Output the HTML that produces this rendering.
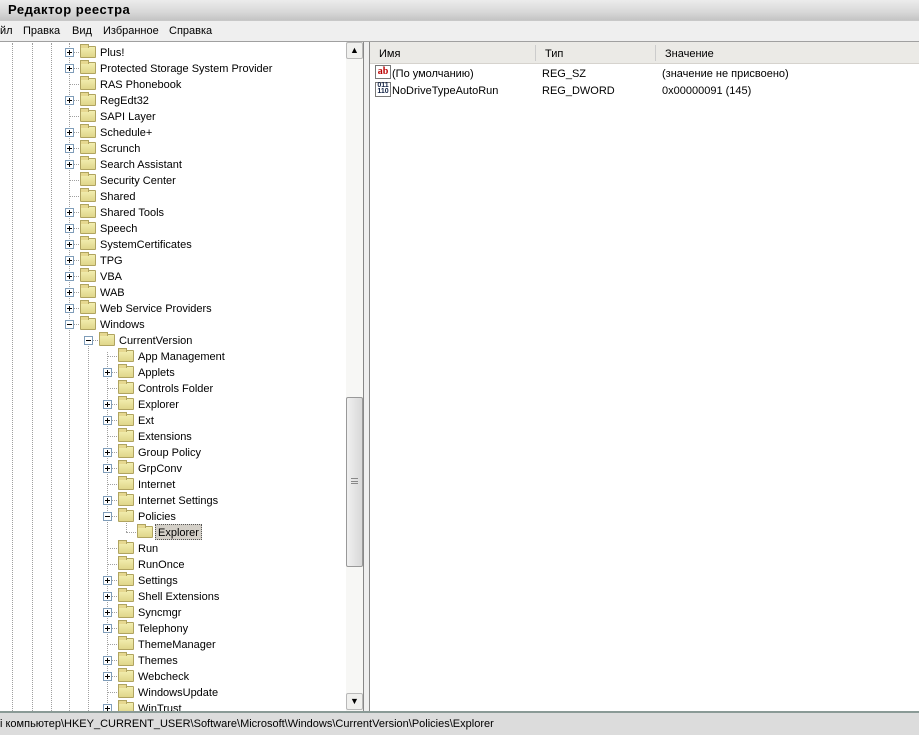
<!DOCTYPE html>
<html><head><meta charset="utf-8"><style>
*{margin:0;padding:0;box-sizing:border-box}
body{width:919px;height:735px;overflow:hidden;background:#fff;font-family:"Liberation Sans",sans-serif;font-size:11px;color:#000;position:relative}
.abs{position:absolute}
#title{left:0;top:0;width:919px;height:20px;background:linear-gradient(#ececec,#d8d8d8 60%,#c4c4c4);font-weight:bold;font-size:13px;padding:2px 0 0 8px;letter-spacing:0.5px}
#menu{left:0;top:20px;width:919px;height:22px;border-top:1px solid #c8c8c8;border-bottom:1px solid #a0a0a0;background:#efefef}
#menu span{position:absolute;top:4px}
.vl{position:absolute;width:1px;border-left:1px dotted #a0a0a0}
.hl{position:absolute;height:1px;border-top:1px dotted #a0a0a0}
.row{position:absolute;height:16px;line-height:18px;white-space:nowrap}
.pb{position:absolute;width:9px;height:9px;border:1px solid #7f9db9;background:#fff}
.pb:before{content:"";position:absolute;left:1px;top:3px;width:5px;height:1px;background:#000}
.pb.p:after{content:"";position:absolute;left:3px;top:1px;width:1px;height:5px;background:#000}
.fd{position:absolute;width:16px;height:12px;background:linear-gradient(#f2eeb0,#e0d68a);border:1px solid #b0a460;border-radius:1px}
.fd:before{content:"";position:absolute;left:-1px;top:-3px;width:7px;height:3px;background:#e6d890;border:1px solid #b0a460;border-bottom:none}
#sb{left:346px;top:42px;width:17px;height:670px;background:#f7f7f5}
#split{left:363px;top:42px;width:7px;height:670px;background:#efefef;border-left:1px solid #888;border-right:1px solid #888}
#hdr{left:370px;top:42px;width:549px;height:22px;background:#ebeae6;border-bottom:1px solid #d6d3ce}
#status{left:0;top:711px;width:919px;height:24px;background:#dcdcdc;border-top:2px solid #8a9a96}
</style></head><body>
<div id="title" class="abs">Редактор реестра</div>
<div id="menu" class="abs"><span style="left:0">йл</span><span style="left:23px">Правка</span><span style="left:72px">Вид</span><span style="left:103px">Избранное</span><span style="left:169px">Справка</span></div>

<div class="vl" style="left:12px;top:43px;height:668px"></div>
<div class="vl" style="left:32px;top:43px;height:668px"></div>
<div class="vl" style="left:51px;top:43px;height:668px"></div>
<div class="vl" style="left:69px;top:43px;height:668px"></div>
<div class="vl" style="left:88px;top:344px;height:367px"></div>
<div class="vl" style="left:107px;top:352px;height:359px"></div>
<div class="vl" style="left:126px;top:520px;height:12px"></div>

<div id="tree">
<div class="hl" style="left:69px;top:52px;width:10px"></div><div class="pb p" style="left:65px;top:48px"></div><div class="fd" style="left:80px;top:46px"></div><div class="row" style="left:100px;top:44px">Plus!</div>
<div class="hl" style="left:69px;top:68px;width:10px"></div><div class="pb p" style="left:65px;top:64px"></div><div class="fd" style="left:80px;top:62px"></div><div class="row" style="left:100px;top:60px">Protected Storage System Provider</div>
<div class="hl" style="left:69px;top:84px;width:10px"></div><div class="fd" style="left:80px;top:78px"></div><div class="row" style="left:100px;top:76px">RAS Phonebook</div>
<div class="hl" style="left:69px;top:100px;width:10px"></div><div class="pb p" style="left:65px;top:96px"></div><div class="fd" style="left:80px;top:94px"></div><div class="row" style="left:100px;top:92px">RegEdt32</div>
<div class="hl" style="left:69px;top:116px;width:10px"></div><div class="fd" style="left:80px;top:110px"></div><div class="row" style="left:100px;top:108px">SAPI Layer</div>
<div class="hl" style="left:69px;top:132px;width:10px"></div><div class="pb p" style="left:65px;top:128px"></div><div class="fd" style="left:80px;top:126px"></div><div class="row" style="left:100px;top:124px">Schedule+</div>
<div class="hl" style="left:69px;top:148px;width:10px"></div><div class="pb p" style="left:65px;top:144px"></div><div class="fd" style="left:80px;top:142px"></div><div class="row" style="left:100px;top:140px">Scrunch</div>
<div class="hl" style="left:69px;top:164px;width:10px"></div><div class="pb p" style="left:65px;top:160px"></div><div class="fd" style="left:80px;top:158px"></div><div class="row" style="left:100px;top:156px">Search Assistant</div>
<div class="hl" style="left:69px;top:180px;width:10px"></div><div class="fd" style="left:80px;top:174px"></div><div class="row" style="left:100px;top:172px">Security Center</div>
<div class="hl" style="left:69px;top:196px;width:10px"></div><div class="fd" style="left:80px;top:190px"></div><div class="row" style="left:100px;top:188px">Shared</div>
<div class="hl" style="left:69px;top:212px;width:10px"></div><div class="pb p" style="left:65px;top:208px"></div><div class="fd" style="left:80px;top:206px"></div><div class="row" style="left:100px;top:204px">Shared Tools</div>
<div class="hl" style="left:69px;top:228px;width:10px"></div><div class="pb p" style="left:65px;top:224px"></div><div class="fd" style="left:80px;top:222px"></div><div class="row" style="left:100px;top:220px">Speech</div>
<div class="hl" style="left:69px;top:244px;width:10px"></div><div class="pb p" style="left:65px;top:240px"></div><div class="fd" style="left:80px;top:238px"></div><div class="row" style="left:100px;top:236px">SystemCertificates</div>
<div class="hl" style="left:69px;top:260px;width:10px"></div><div class="pb p" style="left:65px;top:256px"></div><div class="fd" style="left:80px;top:254px"></div><div class="row" style="left:100px;top:252px">TPG</div>
<div class="hl" style="left:69px;top:276px;width:10px"></div><div class="pb p" style="left:65px;top:272px"></div><div class="fd" style="left:80px;top:270px"></div><div class="row" style="left:100px;top:268px">VBA</div>
<div class="hl" style="left:69px;top:292px;width:10px"></div><div class="pb p" style="left:65px;top:288px"></div><div class="fd" style="left:80px;top:286px"></div><div class="row" style="left:100px;top:284px">WAB</div>
<div class="hl" style="left:69px;top:308px;width:10px"></div><div class="pb p" style="left:65px;top:304px"></div><div class="fd" style="left:80px;top:302px"></div><div class="row" style="left:100px;top:300px">Web Service Providers</div>
<div class="hl" style="left:69px;top:324px;width:10px"></div><div class="pb" style="left:65px;top:320px"></div><div class="fd" style="left:80px;top:318px"></div><div class="row" style="left:100px;top:316px">Windows</div>
<div class="hl" style="left:88px;top:340px;width:10px"></div><div class="pb" style="left:84px;top:336px"></div><div class="fd" style="left:99px;top:334px"></div><div class="row" style="left:119px;top:332px">CurrentVersion</div>
<div class="hl" style="left:107px;top:356px;width:10px"></div><div class="fd" style="left:118px;top:350px"></div><div class="row" style="left:138px;top:348px">App Management</div>
<div class="hl" style="left:107px;top:372px;width:10px"></div><div class="pb p" style="left:103px;top:368px"></div><div class="fd" style="left:118px;top:366px"></div><div class="row" style="left:138px;top:364px">Applets</div>
<div class="hl" style="left:107px;top:388px;width:10px"></div><div class="fd" style="left:118px;top:382px"></div><div class="row" style="left:138px;top:380px">Controls Folder</div>
<div class="hl" style="left:107px;top:404px;width:10px"></div><div class="pb p" style="left:103px;top:400px"></div><div class="fd" style="left:118px;top:398px"></div><div class="row" style="left:138px;top:396px">Explorer</div>
<div class="hl" style="left:107px;top:420px;width:10px"></div><div class="pb p" style="left:103px;top:416px"></div><div class="fd" style="left:118px;top:414px"></div><div class="row" style="left:138px;top:412px">Ext</div>
<div class="hl" style="left:107px;top:436px;width:10px"></div><div class="fd" style="left:118px;top:430px"></div><div class="row" style="left:138px;top:428px">Extensions</div>
<div class="hl" style="left:107px;top:452px;width:10px"></div><div class="pb p" style="left:103px;top:448px"></div><div class="fd" style="left:118px;top:446px"></div><div class="row" style="left:138px;top:444px">Group Policy</div>
<div class="hl" style="left:107px;top:468px;width:10px"></div><div class="pb p" style="left:103px;top:464px"></div><div class="fd" style="left:118px;top:462px"></div><div class="row" style="left:138px;top:460px">GrpConv</div>
<div class="hl" style="left:107px;top:484px;width:10px"></div><div class="fd" style="left:118px;top:478px"></div><div class="row" style="left:138px;top:476px">Internet</div>
<div class="hl" style="left:107px;top:500px;width:10px"></div><div class="pb p" style="left:103px;top:496px"></div><div class="fd" style="left:118px;top:494px"></div><div class="row" style="left:138px;top:492px">Internet Settings</div>
<div class="hl" style="left:107px;top:516px;width:10px"></div><div class="pb" style="left:103px;top:512px"></div><div class="fd" style="left:118px;top:510px"></div><div class="row" style="left:138px;top:508px">Policies</div>
<div class="hl" style="left:126px;top:532px;width:10px"></div><div class="fd" style="left:137px;top:526px"></div><div class="row" style="left:155px;top:524px;background:#d4d0c8;border:1px dotted #555;padding:0 2px;line-height:16px">Explorer</div>
<div class="hl" style="left:107px;top:548px;width:10px"></div><div class="fd" style="left:118px;top:542px"></div><div class="row" style="left:138px;top:540px">Run</div>
<div class="hl" style="left:107px;top:564px;width:10px"></div><div class="fd" style="left:118px;top:558px"></div><div class="row" style="left:138px;top:556px">RunOnce</div>
<div class="hl" style="left:107px;top:580px;width:10px"></div><div class="pb p" style="left:103px;top:576px"></div><div class="fd" style="left:118px;top:574px"></div><div class="row" style="left:138px;top:572px">Settings</div>
<div class="hl" style="left:107px;top:596px;width:10px"></div><div class="pb p" style="left:103px;top:592px"></div><div class="fd" style="left:118px;top:590px"></div><div class="row" style="left:138px;top:588px">Shell Extensions</div>
<div class="hl" style="left:107px;top:612px;width:10px"></div><div class="pb p" style="left:103px;top:608px"></div><div class="fd" style="left:118px;top:606px"></div><div class="row" style="left:138px;top:604px">Syncmgr</div>
<div class="hl" style="left:107px;top:628px;width:10px"></div><div class="pb p" style="left:103px;top:624px"></div><div class="fd" style="left:118px;top:622px"></div><div class="row" style="left:138px;top:620px">Telephony</div>
<div class="hl" style="left:107px;top:644px;width:10px"></div><div class="fd" style="left:118px;top:638px"></div><div class="row" style="left:138px;top:636px">ThemeManager</div>
<div class="hl" style="left:107px;top:660px;width:10px"></div><div class="pb p" style="left:103px;top:656px"></div><div class="fd" style="left:118px;top:654px"></div><div class="row" style="left:138px;top:652px">Themes</div>
<div class="hl" style="left:107px;top:676px;width:10px"></div><div class="pb p" style="left:103px;top:672px"></div><div class="fd" style="left:118px;top:670px"></div><div class="row" style="left:138px;top:668px">Webcheck</div>
<div class="hl" style="left:107px;top:692px;width:10px"></div><div class="fd" style="left:118px;top:686px"></div><div class="row" style="left:138px;top:684px">WindowsUpdate</div>
<div class="pb p" style="left:103px;top:704px"></div><div class="fd" style="left:118px;top:702px"></div><div class="row" style="left:138px;top:700px">WinTrust</div>
</div>

<div id="sb" class="abs">
 <div class="abs" style="left:0;top:0;width:17px;height:17px;background:#f0f0ee;border:1px solid #b8b8b8;border-radius:2px;text-align:center;font-size:9px;line-height:15px">&#9650;</div>
 <div class="abs" style="left:0;top:355px;width:17px;height:170px;background:linear-gradient(90deg,#f0f0f0,#d8d8d8);border:1px solid #999;border-radius:2px"><div style="position:absolute;left:4px;top:80px;width:7px;height:6px;border-top:1px solid #888;border-bottom:1px solid #888"></div><div style="position:absolute;left:4px;top:83px;width:7px;border-top:1px solid #888"></div></div>
 <div class="abs" style="left:0;top:651px;width:17px;height:17px;background:#f0f0ee;border:1px solid #b8b8b8;border-radius:2px;text-align:center;font-size:9px;line-height:15px">&#9660;</div>
</div>
<div id="split" class="abs"></div>

<div id="hdr" class="abs">
 <span class="abs" style="left:9px;top:6px">Имя</span>
 <div class="abs" style="left:165px;top:3px;width:1px;height:16px;background:#ccc"></div>
 <span class="abs" style="left:175px;top:6px">Тип</span>
 <div class="abs" style="left:285px;top:3px;width:1px;height:16px;background:#ccc"></div>
 <span class="abs" style="left:295px;top:6px">Значение</span>
</div>
<div class="abs" style="left:375px;top:65px;width:16px;height:14px;border:1px solid #777;background:#fff;font-size:10px;font-weight:bold;color:#b00;line-height:11px;text-align:center;font-family:'Liberation Serif',serif">ab</div>
<div class="row" style="left:392px;top:65px">(По умолчанию)</div>
<div class="row" style="left:542px;top:65px">REG_SZ</div>
<div class="row" style="left:662px;top:65px">(значение не присвоено)</div>
<div class="abs" style="left:375px;top:82px;width:16px;height:15px;border:1px solid #777;background:#fff;font-size:7px;font-weight:bold;color:#124;line-height:6px;text-align:center">011<br>110</div>
<div class="row" style="left:392px;top:82px">NoDriveTypeAutoRun</div>
<div class="row" style="left:542px;top:82px">REG_DWORD</div>
<div class="row" style="left:662px;top:82px">0x00000091 (145)</div>

<div id="status" class="abs"><span class="abs" style="left:0;top:5px">i компьютер\HKEY_CURRENT_USER\Software\Microsoft\Windows\CurrentVersion\Policies\Explorer</span></div>
</body></html>
